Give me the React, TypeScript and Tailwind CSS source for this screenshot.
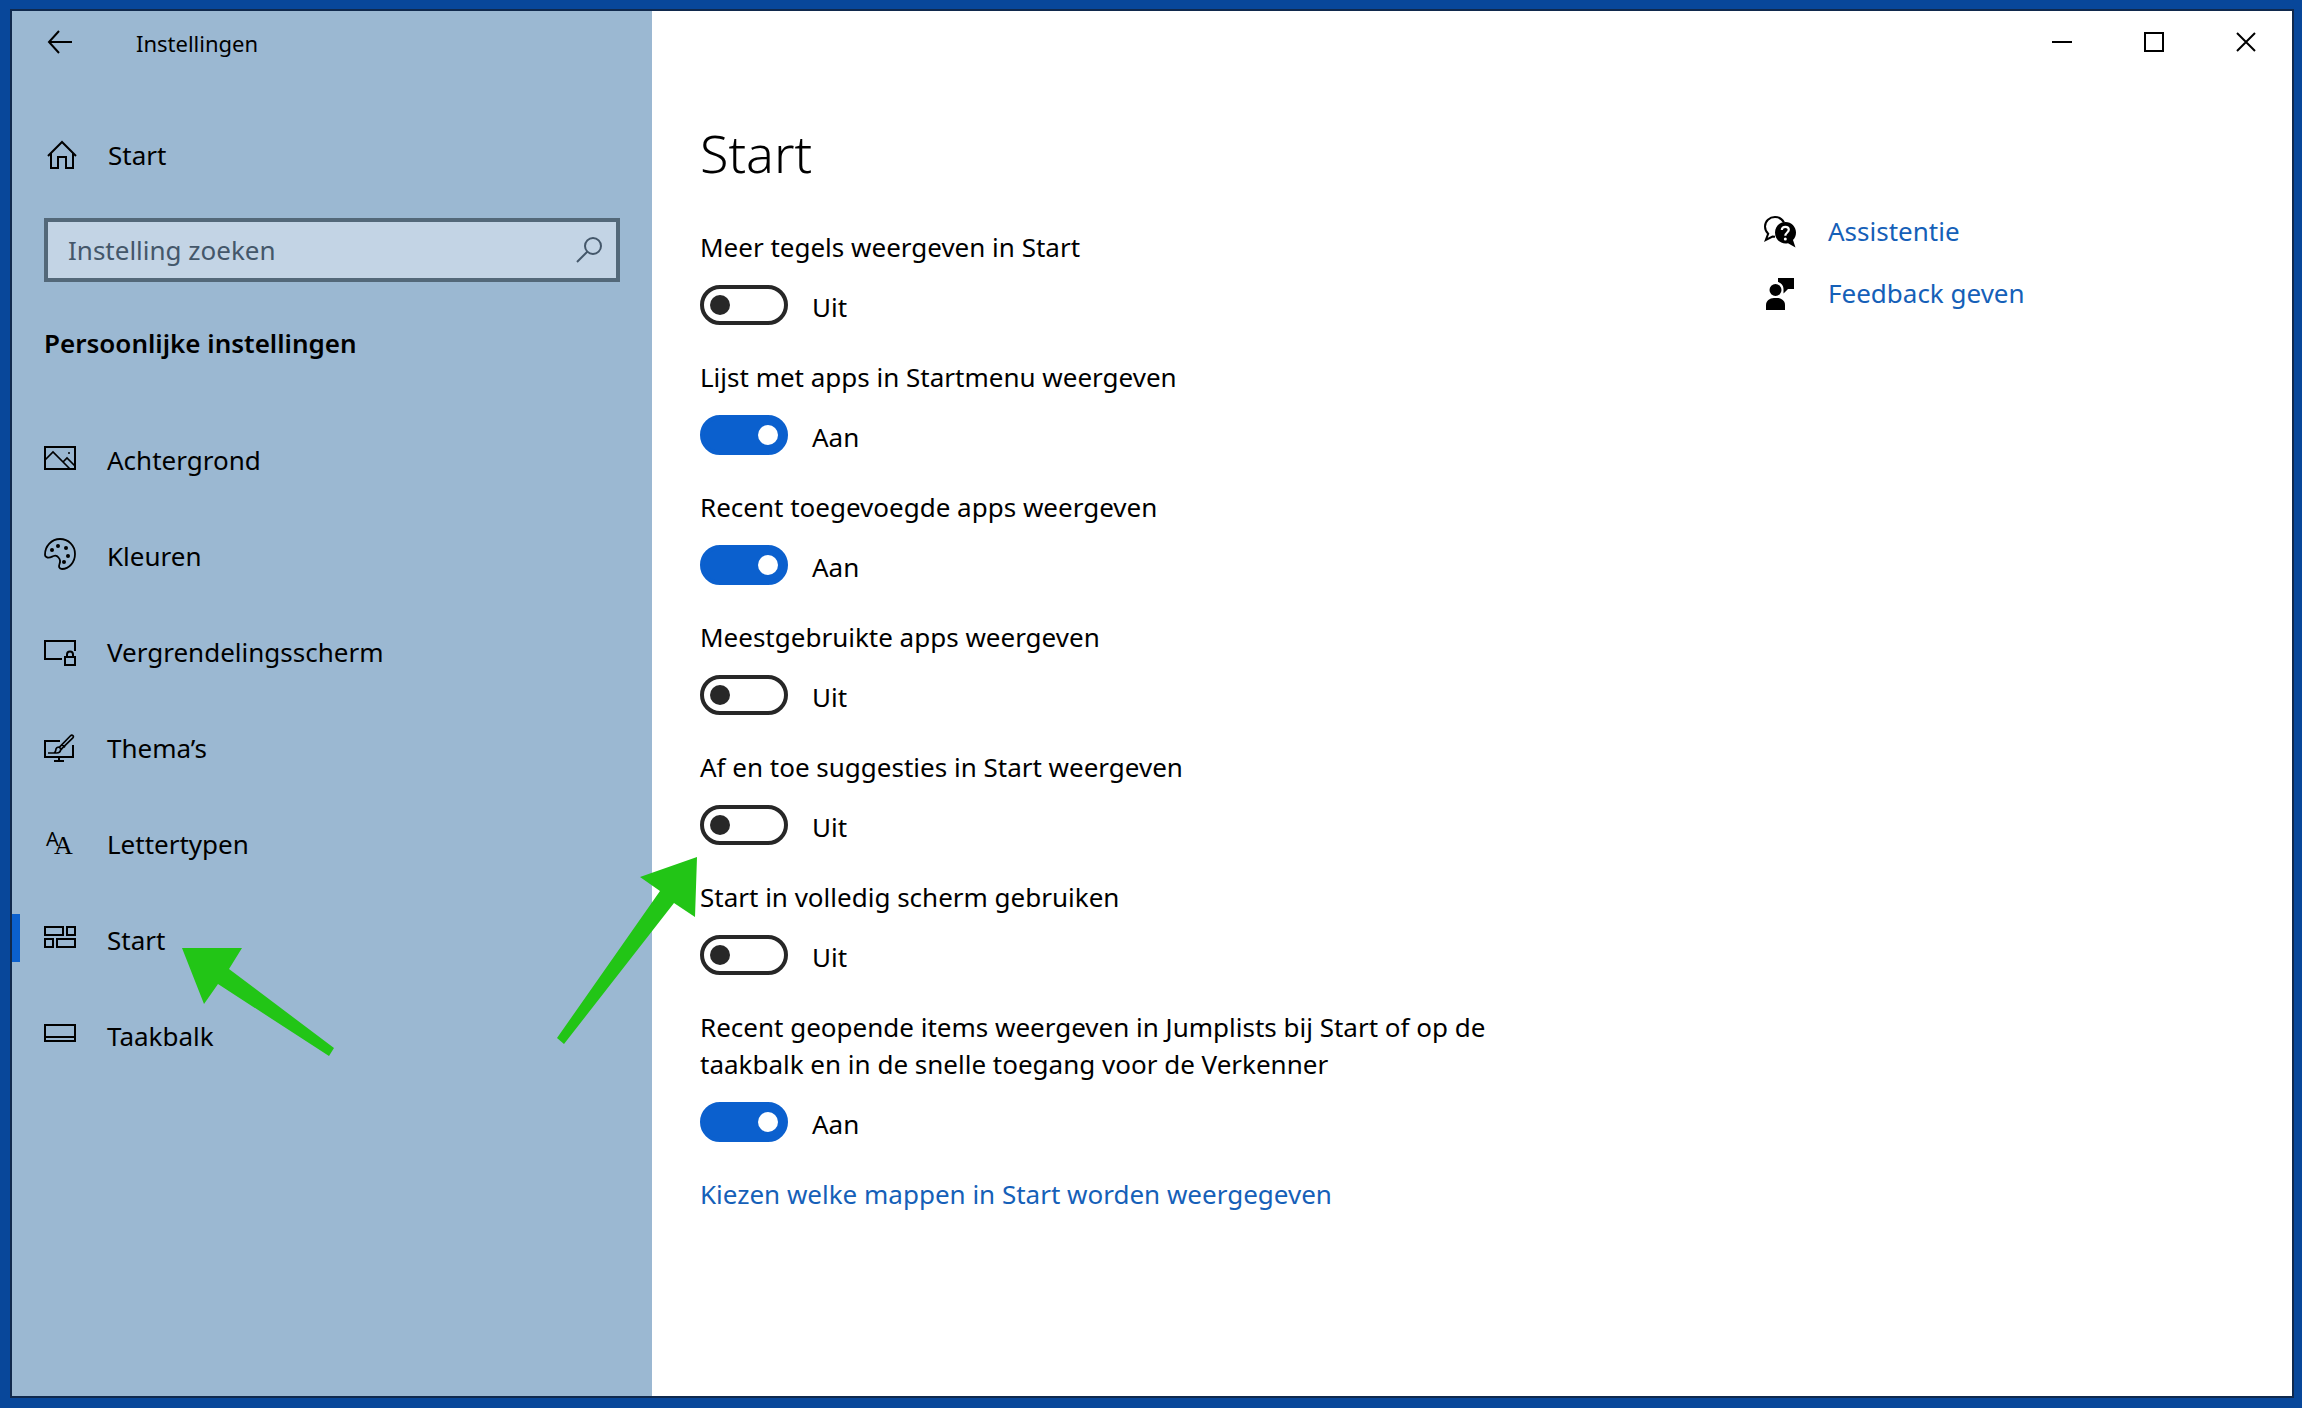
import React, { useState } from "react";

interface NavItem {
  label: string;
  icon: React.ReactNode;
  active?: boolean;
}

interface Setting {
  id: string;
  label: string;
  enabled: boolean;
}

interface IconProps {
  children: React.ReactNode;
}

const Icon: React.FC<IconProps> = ({ children }) => (
  <svg
    className="size-8 shrink-0 overflow-visible"
    viewBox="0 0 32 32"
    fill="none"
    stroke="currentColor"
    strokeWidth={2}
    aria-hidden="true"
  >
    {children}
  </svg>
);

const navItems: NavItem[] = [
  {
    label: "Achtergrond",
    icon: (
      <Icon>
        <path d="M1 5h30v22H1z" />
        <path d="M1 18l8-8 17 17M19 20l4-4 8 8" strokeWidth={1.7} />
        <circle cx="25" cy="11" r="1" fill="currentColor" stroke="none" />
      </Icon>
    ),
  },
  {
    label: "Kleuren",
    icon: (
      <Icon>
        <path
          d="M1 16.500C1 8 7.500 1 16 1s15 6.700 15 15-6 15-13 15c-3 0-3.500-2.500-2.500-5 1-2.400.5-4.800-1-6.500-1.500-2-3.500-2.200-5-1.500-2 .800-3.500 2-6 1.500-1.700-.4-2.500-1.500-2.500-3z"
          strokeWidth={1.8}
        />
        <g fill="currentColor" stroke="none">
          <circle cx="8" cy="12" r="2" />
          <circle cx="14" cy="8" r="2" />
          <circle cx="22" cy="10" r="2" />
          <circle cx="24" cy="18" r="2" />
          <circle cx="20" cy="24" r="2" />
        </g>
      </Icon>
    ),
  },
  {
    label: "Vergrendelingsscherm",
    icon: (
      <Icon>
        <path d="M18 25H1V7h30v10" />
        <path d="M21 23h10v8H21z" />
        <path d="M23 23v-2.500a3 3 0 0 1 6 0V23" />
      </Icon>
    ),
  },
  {
    label: "Thema’s",
    icon: (
      <Icon>
        <path d="M16 11H1v16h28V15M15 27v4M10 31h10" />
        <path
          d="M4 23h8.500c2.500 0 4-1.200 4-3.200L28.600 8.200c1-1 1-2 .3-2.600s-1.700-.5-2.600.4L15.500 17c-2-.2-3.600 1-3.700 3-.1 1.500-.6 2.300-1.600 3M15 17l3 3M18 14.300l3 3"
          strokeWidth={1.7}
        />
      </Icon>
    ),
  },
  {
    label: "Lettertypen",
    icon: (
      <Icon>
        <text
          x="2"
          y="20"
          fontSize="20"
          fontFamily="Noto Sans, sans-serif"
          fill="currentColor"
          stroke="none"
        >
          A
        </text>
        <text
          x="10"
          y="28"
          fontSize="26"
          fontFamily="Liberation Serif, serif"
          fill="currentColor"
          stroke="none"
        >
          A
        </text>
      </Icon>
    ),
  },
  {
    label: "Start",
    active: true,
    icon: (
      <Icon>
        <path d="M1 5h18v8H1zM23 5h8v8h-8zM1 17h8v8H1zM13 17h18v8H13z" />
      </Icon>
    ),
  },
  {
    label: "Taakbalk",
    icon: (
      <Icon>
        <path d="M1 7h30v16H1zM1 19h30" />
      </Icon>
    ),
  },
];

const initialSettings: Setting[] = [
  { id: "more-tiles", label: "Meer tegels weergeven in Start", enabled: false },
  { id: "app-list", label: "Lijst met apps in Startmenu weergeven", enabled: true },
  { id: "recent-apps", label: "Recent toegevoegde apps weergeven", enabled: true },
  { id: "most-used", label: "Meestgebruikte apps weergeven", enabled: false },
  { id: "suggestions", label: "Af en toe suggesties in Start weergeven", enabled: false },
  { id: "full-screen", label: "Start in volledig scherm gebruiken", enabled: false },
  {
    id: "jumplists",
    label:
      "Recent geopende items weergeven in Jumplists bij Start of op de taakbalk en in de snelle toegang voor de Verkenner",
    enabled: true,
  },
];

const Sidebar: React.FC = () => (
  <aside className="w-[640px] shrink-0 bg-[#9bb8d2]">
    <div className="flex h-[62px] items-center gap-[52px] pl-8">
      <button type="button" aria-label="Terug">
        <svg className="h-8 w-10" viewBox="0 0 40 32" fill="none" stroke="currentColor" strokeWidth={2}>
          <path d="M28 16H5M15 5L5 16l10 11" />
        </svg>
      </button>
      <span className="pt-0.5 text-[22px]">Instellingen</span>
    </div>

    <a href="#start" className="mt-[58px] flex h-12 items-center gap-8 pl-8">
      <Icon>
        <path d="M4 17L18 3l14 14M7 14.500V29h7V18h8v11h7V14.500" />
      </Icon>
      <span>Start</span>
    </a>

    <form className="relative mx-8 mt-[39px]" role="search">
      <input
        type="search"
        aria-label="Instelling zoeken"
        placeholder="Instelling zoeken"
        className="block h-16 w-full border-4 border-[#536879] bg-[#c3d4e5] pr-16 pl-5 outline-none placeholder:text-[#44576a] placeholder:opacity-100"
      />
      <svg
        className="absolute top-4 right-4 size-8 text-[#44576a]"
        viewBox="0 0 32 32"
        fill="none"
        stroke="currentColor"
        strokeWidth={2}
        aria-hidden="true"
      >
        <circle cx="21" cy="12" r="8" />
        <path d="M15.500 17.500L5 28" />
      </svg>
    </form>

    <h2 className="mt-[43px] pl-8 font-semibold">Persoonlijke instellingen</h2>

    <nav className="mt-12">
      {navItems.map((item) => (
        <a
          key={item.label}
          href={"#" + item.label.toLowerCase()}
          aria-current={item.active ? "page" : undefined}
          className="relative flex h-24 items-center gap-[31px] pl-8"
        >
          {item.active && <span className="absolute left-0 h-12 w-2 bg-[#0b60ce]" />}
          {item.icon}
          <span className="pt-1">{item.label}</span>
        </a>
      ))}
    </nav>
  </aside>
);

const WindowControls: React.FC = () => (
  <div className="flex h-[62px] justify-end">
    <button type="button" aria-label="Minimaliseren" className="flex w-[92px] items-center justify-center">
      <svg className="size-5" viewBox="0 0 20 20" stroke="currentColor" strokeWidth={2}>
        <path d="M0 10h20" />
      </svg>
    </button>
    <button type="button" aria-label="Maximaliseren" className="flex w-[92px] items-center justify-center">
      <svg className="size-5" viewBox="0 0 20 20" fill="none" stroke="currentColor" strokeWidth={2}>
        <path d="M1 1h18v18H1z" />
      </svg>
    </button>
    <button type="button" aria-label="Sluiten" className="flex w-[92px] items-center justify-center">
      <svg className="size-5" viewBox="0 0 20 20" stroke="currentColor" strokeWidth={2}>
        <path d="M1 1l18 18M19 1L1 19" />
      </svg>
    </button>
  </div>
);

interface SettingRowProps {
  setting: Setting;
  onToggle: (id: string) => void;
}

const SettingRow: React.FC<SettingRowProps> = ({ setting, onToggle }) => (
  <div>
    <label htmlFor={setting.id} className="block">
      {setting.label}
    </label>
    <div className="mt-[19px] flex h-10 items-center gap-6">
      <input
        id={setting.id}
        type="checkbox"
        role="switch"
        checked={setting.enabled}
        onChange={() => onToggle(setting.id)}
        className="flex h-10 w-[88px] shrink-0 appearance-none items-center rounded-full border-4 border-[#272727] px-1.5 before:size-5 before:rounded-full before:bg-[#272727] checked:justify-end checked:border-[#0b60ce] checked:bg-[#0b60ce] checked:before:bg-white"
      />
      <span className="pt-1">{setting.enabled ? "Aan" : "Uit"}</span>
    </div>
  </div>
);

const HelpLinks: React.FC = () => (
  <div className="flex flex-col gap-[25px] pt-[140px] whitespace-nowrap">
    <a href="#assistentie" className="flex items-center gap-8">
      <svg className="size-8 text-black" viewBox="0 0 32 32" aria-hidden="true">
        <path
          d="M20 6.500C18 3 14.500 1 11 1 5.500 1 1 5.200 1 10.500c0 3 1.200 5.300 3.200 7.200L1.800 24l6.700-3.500 2.500.3"
          fill="none"
          stroke="currentColor"
          strokeWidth="2"
        />
        <path
          d="M21.500 6C27.300 6 32 10.700 32 16.500c0 3-1.100 5.600-3 7.500l2.500 7.500-7.500-4.300c-.8.200-1.600.3-2.500.3C15.700 27.500 11 22.800 11 16.500S15.700 6 21.500 6z"
          fill="currentColor"
        />
        <path
          d="M17.800 14c0-2 1.500-3.200 3.500-3.200s3.500 1.200 3.500 3c0 2.600-3.500 2.800-3.500 6"
          fill="none"
          stroke="white"
          strokeWidth="2.200"
        />
        <circle cx="21.300" cy="23" r="1.500" fill="white" />
      </svg>
      <span className="text-[#1560b8]">Assistentie</span>
    </a>
    <a href="#feedback" className="flex items-center gap-8">
      <svg className="size-8 text-black" viewBox="0 0 32 32" fill="currentColor" aria-hidden="true">
        <circle cx="11.500" cy="12" r="6" />
        <path d="M2 32v-5c0-4 3.500-7 8-7h3c4.500 0 8 3 8 7v5z" />
        <path d="M14 0h16v11h-6l-4.500 4.500V11c0-3.500-2.300-6.200-5.500-7z" />
      </svg>
      <span className="text-[#1560b8]">Feedback geven</span>
    </a>
  </div>
);

const App: React.FC = () => {
  const [settings, setSettings] = useState<Setting[]>(initialSettings);

  const toggleSetting = (id: string) => {
    setSettings((current) =>
      current.map((setting) =>
        setting.id === id ? { ...setting, enabled: !setting.enabled } : setting
      )
    );
  };

  return (
    <div className="flex min-h-screen bg-[#08479a] pt-[9px] pr-2 pb-2.5 pl-2.5 font-['Noto_Sans',sans-serif] text-[26px] leading-[37px] text-black">
      <div className="relative flex grow border-2 border-[#10294d] bg-white">
        <Sidebar />

        <main className="grow">
          <WindowControls />
          <div className="flex pl-12">
            <div className="w-full max-w-[1064px]">
              <h1 className="mt-12 mb-11 text-[52px] leading-[64px] font-[350]">
                Start
              </h1>
              <div className="flex max-w-[820px] flex-col gap-[34px]">
                {settings.map((setting) => (
                  <SettingRow key={setting.id} setting={setting} onToggle={toggleSetting} />
                ))}
                <a href="#mappen" className="text-[#1560b8]">
                  Kiezen welke mappen in Start worden weergegeven
                </a>
              </div>
            </div>
            <HelpLinks />
          </div>
        </main>

        {/* Pointers to the menu entry and the suggestions switch */}
        <svg
          className="pointer-events-none absolute top-[937px] left-[170px] h-[108px] w-[152px]"
          viewBox="0 0 152 108"
          fill="#22c516"
          aria-hidden="true"
        >
          <path d="M0 0h60L47 21l105 79-5 8L36 36 22 56z" />
        </svg>
        <svg
          className="pointer-events-none absolute top-[846px] left-[545px] h-[187px] w-[140px]"
          viewBox="0 0 140 187"
          fill="#22c516"
          aria-hidden="true"
        >
          <path d="M140 0l-57 20 20 14L0 181l7 6L117 46l21 14z" />
        </svg>
      </div>
    </div>
  );
};

export default App;
